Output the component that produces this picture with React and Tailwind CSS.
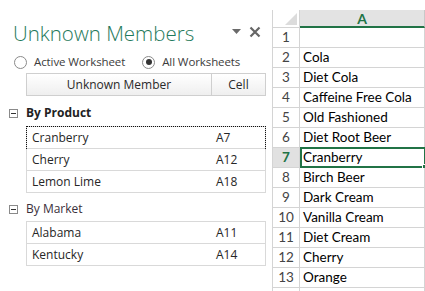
import React from 'react'

const PANEL_FONT = { fontFamily: '"Open Sans", "Noto Sans", sans-serif' }
const SHEET_FONT = { fontFamily: 'Lato, "Open Sans", sans-serif' }

const CELLS = [
  '',
  'Cola',
  'Diet Cola',
  'Caffeine Free Cola',
  'Old Fashioned',
  'Diet Root Beer',
  'Cranberry',
  'Birch Beer',
  'Dark Cream',
  'Vanilla Cream',
  'Diet Cream',
  'Cherry',
  'Orange',
]

const GROUPS = [
  {
    name: 'By Product',
    bold: true,
    items: [
      ['Cranberry', 'A7'],
      ['Cherry', 'A12'],
      ['Lemon Lime', 'A18'],
    ],
  },
  {
    name: 'By Market',
    bold: false,
    items: [
      ['Alabama', 'A11'],
      ['Kentucky', 'A14'],
    ],
  },
]

function Radio({ checked, label, className = '' }) {
  return (
    <label className={`flex items-center gap-[7px] ${className}`}>
      <span className="flex h-[13px] w-[13px] items-center justify-center rounded-full border border-[#8a8a8a] bg-white">
        {checked && <span className="h-[6px] w-[6px] rounded-full bg-[#333]" />}
      </span>
      <span className="text-[11.5px] leading-[16px] tracking-[-0.1px] text-[#3c3c3c]">{label}</span>
    </label>
  )
}

function Group({ group, first }) {
  return (
    <div className={first ? 'mt-[9px]' : 'mt-[8px]'}>
      <div className="flex h-[16px] items-center">
        <span className="ml-[9px] flex h-[9px] w-[9px] items-center justify-center border border-[#8a8a8a] bg-white">
          <span className="h-px w-[5px] bg-[#333]" />
        </span>
        <span
          className={`ml-[8px] text-[12px] leading-[16px] ${
            group.bold ? 'font-bold text-[#222]' : 'text-[#3a2f3a]'
          }`}
        >
          {group.name}
        </span>
      </div>
      <div className={`ml-[26px] w-[240px] border border-[#d9d9d9] bg-white ${first ? 'mt-[5px]' : 'mt-[4px]'}`}>
        {group.items.map(([name, cell], i) => (
          <div
            key={name}
            className={`relative flex items-center text-[12px] text-[#262626] ${
              i > 0 ? 'h-[22px] border-t border-[#d9d9d9]' : 'h-[21px]'
            }`}
          >
            {first && i === 0 && (
              <span className="absolute -inset-px border border-dotted border-[#111]" />
            )}
            <span className="w-[184px] pl-[5px]">{name}</span>
            <span className="pl-[5px]">{cell}</span>
          </div>
        ))}
      </div>
    </div>
  )
}

function Panel() {
  return (
    <div className="w-[272px] shrink-0" style={PANEL_FONT}>
      <div className="flex h-[46px] items-start justify-between pt-[20px] pl-[13px] pr-[11px]">
        <h1 className="text-[20.5px] font-light leading-[26px] text-[#1f7a5c]">Unknown Members</h1>
        <div className="mt-[6px] flex items-center gap-[8px]">
          <svg width="9" height="6" viewBox="0 0 9 6" aria-hidden>
            <path d="M0 0h9L4.5 5z" fill="#6a6a6a" />
          </svg>
          <svg width="12" height="12" viewBox="0 0 12 12" aria-hidden>
            <path d="M1.5 1.5l9 9M10.5 1.5l-9 9" stroke="#666" strokeWidth="2.2" />
          </svg>
        </div>
      </div>

      <div className="mt-[8px] flex h-[16px] items-center">
        <Radio label="Active Worksheet" className="ml-[14px]" />
        <Radio checked label="All Worksheets" className="ml-[17px]" />
      </div>

      <div className="mt-[3px] ml-[26px] flex h-[23px] w-[240px] border border-[#cfcfcf] bg-gradient-to-b from-white to-[#efefef] text-[12px] text-[#2a2a2a]">
        <div className="flex w-[185px] items-center justify-center border-r border-[#cfcfcf]">
          Unknown Member
        </div>
        <div className="flex flex-1 items-center justify-center">Cell</div>
      </div>

      {GROUPS.map((g, i) => (
        <Group key={g.name} group={g} first={i === 0} />
      ))}
    </div>
  )
}

function Sheet() {
  return (
    <div className="flex-1 pt-[10px]" style={SHEET_FONT}>
      <div className="border-l border-[#d4d4d4]">
        <div className="flex h-[18px]">
          <div className="relative w-[27px] border-r border-b border-[#d4d4d4] bg-white">
            <svg className="absolute right-[2px] bottom-[2px]" width="12" height="12" viewBox="0 0 12 12" aria-hidden>
              <path d="M12 0v12H0z" fill="#dcdcdc" />
            </svg>
          </div>
          <div className="flex w-[125px] items-center justify-center border-r border-b-2 border-r-[#c8c8c8] border-b-[#217346] bg-[#e3e3e3] text-[14px] font-bold text-[#217346]">
            A
          </div>
          <div className="flex-1 border-b border-[#d4d4d4] bg-[#efefef]" />
        </div>
        {CELLS.map((text, i) => {
          const active = i === 6
          return (
            <div key={i} className="relative flex h-[20px] border-b border-[#d4d4d4]">
              <div
                className={`flex w-[27px] items-center justify-center border-r border-[#d4d4d4] text-[13.5px] ${
                  active ? 'bg-[#e1e1e1] font-bold text-[#217346]' : 'bg-white text-[#444]'
                }`}
              >
                {i + 1}
              </div>
              <div className="flex w-[125px] items-center border-r border-[#d4d4d4] pl-[3px] text-[13.5px] text-black">
                {text}
              </div>
              {active && (
                <div className="absolute top-[-1px] left-[27px] h-[21px] w-[126px] border-2 border-[#217346]">
                  <span className="absolute right-[-3px] bottom-[-3px] h-[5px] w-[5px] border border-white bg-[#217346]" />
                </div>
              )}
            </div>
          )
        })}
        <div className="flex h-[20px]">
          <div className="w-[27px] border-r border-[#d4d4d4]" />
          <div className="w-[125px] border-r border-[#d4d4d4]" />
        </div>
      </div>
    </div>
  )
}

export default function App() {
  return (
    <div className="flex h-[291px] w-[425px] overflow-hidden bg-white">
      <Panel />
      <Sheet />
    </div>
  )
}
